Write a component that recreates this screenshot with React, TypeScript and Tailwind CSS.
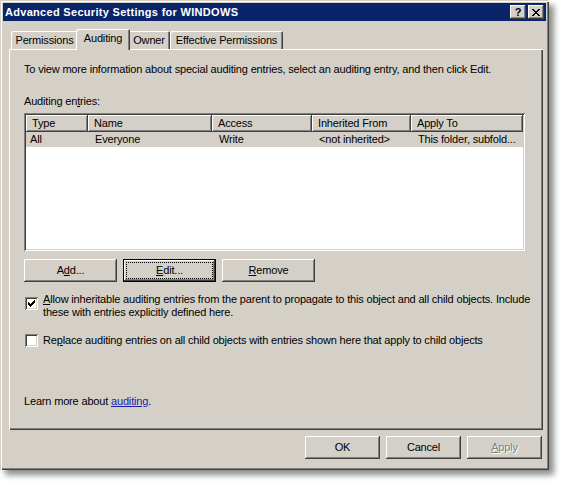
import React from 'react';

const font = "font-['Liberation_Sans',Arial,sans-serif]";

const raised =
  'shadow-[inset_-1px_-1px_#404040,inset_1px_1px_#ffffff,inset_-2px_-2px_#808080,inset_2px_2px_#d4d0c8]';
const sunken =
  'shadow-[inset_1px_1px_#808080,inset_-1px_-1px_#ffffff,inset_2px_2px_#404040,inset_-2px_-2px_#d4d0c8]';

function Btn({ children, w, isDefault, disabled }: { children: React.ReactNode; w: string; isDefault?: boolean; disabled?: boolean }) {
  return (
    <div
      className={`${w} h-[23px] flex items-center justify-center bg-[#d4d0c8] ${
        isDefault
          ? 'shadow-[inset_0_0_0_1px_#000000,inset_-2px_-2px_#404040,inset_2px_2px_#ffffff,inset_-3px_-3px_#808080]'
          : raised
      } ${disabled ? 'text-[#808080] [text-shadow:1px_1px_#ffffff]' : 'text-black'}`}
    >
      {isDefault ? (
        <span className="flex items-center justify-center w-[calc(100%-8px)] h-[15px] outline-1 outline-dotted outline-black">
          {children}
        </span>
      ) : (
        children
      )}
    </div>
  );
}

function Check({ checked }: { checked?: boolean }) {
  return (
    <div className={`w-[13px] h-[13px] shrink-0 bg-white flex items-center justify-center ${sunken}`}>
      {checked && (
        <svg width="7" height="7" viewBox="0 0 7 7" shapeRendering="crispEdges">
          <rect x="6" y="0" width="1" height="3" fill="#000" />
          <rect x="5" y="1" width="1" height="3" fill="#000" />
          <rect x="4" y="2" width="1" height="3" fill="#000" />
          <rect x="3" y="3" width="1" height="3" fill="#000" />
          <rect x="2" y="4" width="1" height="3" fill="#000" />
          <rect x="1" y="3" width="1" height="3" fill="#000" />
          <rect x="0" y="2" width="1" height="3" fill="#000" />
        </svg>
      )}
    </div>
  );
}

const columns = [
  { label: 'Type', w: 'w-[62px]', value: 'All', pad: 'pl-[4px]' },
  { label: 'Name', w: 'w-[124px]', value: 'Everyone', pad: 'pl-[7px]' },
  { label: 'Access', w: 'w-[100px]', value: 'Write', pad: 'pl-[7px]' },
  { label: 'Inherited From', w: 'w-[99px]', value: '<not inherited>', pad: 'pl-[7px]' },
  { label: 'Apply To', w: 'w-[112px]', value: 'This folder, subfold...', pad: 'pl-[7px]' },
];

const tabEdge = 'rounded-t-[2px] shadow-[inset_1px_1px_#ffffff,inset_-1px_0_#404040,inset_-2px_0_#808080]';

function Tab({ label, w, active }: { label: string; w: string; active?: boolean }) {
  if (active) {
    return (
      <div className={`relative z-10 -mx-[2px] -mb-[1px] h-[21px] ${w} flex items-start justify-center pt-[3px] bg-[#d4d0c8] ${tabEdge}`}>
        {label}
      </div>
    );
  }
  return (
    <div className={`${w} h-[18px] flex items-start justify-center pt-[3px] bg-[#d4d0c8] ${tabEdge}`}>
      {label}
    </div>
  );
}

export default function App() {
  return (
    <div className={`w-[563px] h-[481px] bg-white text-[11px] leading-[13px] tracking-[-0.17px] text-black ${font}`}>
      <div className="w-[549px] h-[470px] flex flex-col p-[3px] bg-[#d4d0c8] shadow-[inset_1px_1px_#d4d0c8,inset_2px_2px_#ffffff,inset_-1px_-1px_#404040,inset_-2px_-2px_#808080,5px_5px_6px_rgba(0,0,0,0.45)]">
        {/* title bar */}
        <div className="h-[18px] flex items-center justify-between bg-[#0a246a] pl-[2px] pr-[2px]">
          <span className="text-white font-bold text-[11px] tracking-[0.3px]">Advanced Security Settings for WINDOWS</span>
          <div className="flex gap-[2px]">
            <div className={`w-[16px] h-[14px] flex items-center justify-center bg-[#d4d0c8] font-bold text-[11px] leading-none ${raised}`}>
              ?
            </div>
            <div className={`w-[16px] h-[14px] flex items-center justify-center bg-[#d4d0c8] ${raised}`}>
              <svg width="8" height="7" viewBox="0 0 8 7" shapeRendering="crispEdges">
                <path d="M0 0h2v1h-2zM6 0h2v1h-2zM1 1h2v1h-2zM5 1h2v1h-2zM2 2h4v1h-4zM3 3h2v1h-2zM2 4h4v1h-4zM1 5h2v1h-2zM5 5h2v1h-2zM0 6h2v1h-2zM6 6h2v1h-2z" fill="#000" />
              </svg>
            </div>
          </div>
        </div>

        <div className="ml-[6px] flex flex-col">
          {/* tabs */}
          <div className="mt-[8px] h-[20px] flex items-end pl-[2px]">
            <Tab label="Permissions" w="w-[67px]" />
            <Tab label="Auditing" w="w-[54px]" active />
            <Tab label="Owner" w="w-[42px]" />
            <Tab label="Effective Permissions" w="w-[113px]" />
          </div>

          {/* panel */}
          <div className="w-[534px] h-[381px] flex flex-col pt-[14px] pl-[15px] shadow-[inset_1px_1px_#ffffff,inset_-1px_-1px_#404040,inset_-2px_-2px_#808080]">
            <p>To view more information about special auditing entries, select an auditing entry, and then click Edit.</p>
            <p className="mt-[19px]">
              Auditing en<span className="underline">t</span>ries:
            </p>

            {/* list view */}
            <div className={`mt-[5px] w-[501px] h-[138px] bg-white p-[2px] flex flex-col ${sunken}`}>
              <div className="flex h-[17px]">
                {columns.map((c) => (
                  <div key={c.label} className={`${c.w} h-[17px] flex items-center pl-[6px] bg-[#d4d0c8] ${raised}`}>
                    {c.label}
                  </div>
                ))}
              </div>
              <div className="flex h-[15px] bg-[#d4d0c8] items-center">
                {columns.map((c) => (
                  <div key={c.label} className={`${c.w} ${c.pad} whitespace-nowrap`}>
                    {c.value}
                  </div>
                ))}
              </div>
            </div>

            {/* buttons */}
            <div className="mt-[8px] flex gap-[6px]">
              <Btn w="w-[93px]">
                <span>
                  A<span className="underline">d</span>d...
                </span>
              </Btn>
              <Btn w="w-[93px]" isDefault>
                <span>
                  <span className="underline">E</span>dit...
                </span>
              </Btn>
              <Btn w="w-[93px]">
                <span>
                  <span className="underline">R</span>emove
                </span>
              </Btn>
            </div>

            {/* checkboxes */}
            <div className="mt-[11px] flex items-start pl-[1px]">
              <div className="mt-[4px]">
                <Check checked />
              </div>
              <p className="ml-[5px] whitespace-nowrap">
                <span className="underline">A</span>llow inheritable auditing entries from the parent to propagate to this object and all child objects. Include
                <br />
                these with entries explicitly defined here.
              </p>
            </div>
            <div className="mt-[15px] flex items-start pl-[1px]">
              <Check />
              <p className="ml-[5px] whitespace-nowrap">
                Re<span className="underline">p</span>lace auditing entries on all child objects with entries shown here that apply to child objects
              </p>
            </div>

            <p className="mt-[48px]">
              Learn more about <span className="text-[#1c1ca8] underline">auditing</span>.
            </p>
          </div>

          {/* bottom buttons */}
          <div className="mt-[6px] w-[534px] pr-[1px] flex justify-end gap-[6px]">
            <Btn w="w-[75px]">OK</Btn>
            <Btn w="w-[75px]">Cancel</Btn>
            <Btn w="w-[75px]" disabled>
              <span>
                <span className="underline">A</span>pply
              </span>
            </Btn>
          </div>
        </div>
      </div>
    </div>
  );
}
